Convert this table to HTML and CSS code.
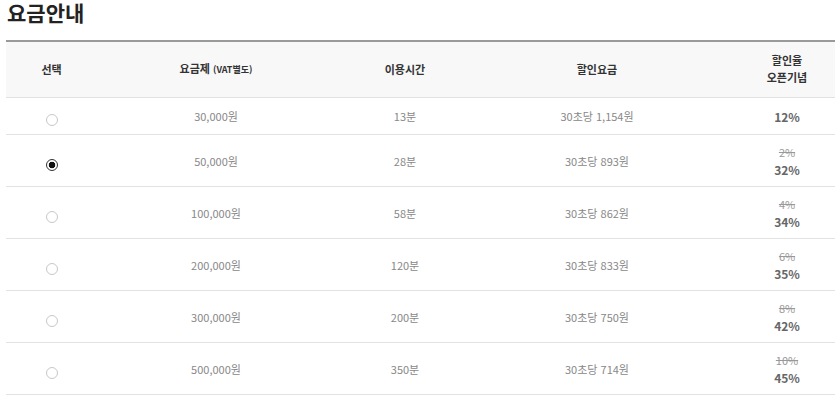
FILE: index.html
```html
<!DOCTYPE html>
<html lang="ko">
<head>
<meta charset="utf-8">
<title>요금안내</title>
<link rel="stylesheet" href="styles.css">
</head>
<body>
<div class="page">
  <h2 class="title">요금안내</h2>
  <table class="price-table">
    <colgroup>
      <col class="c1"><col class="c2"><col class="c3"><col class="c4"><col class="c5">
    </colgroup>
    <thead>
      <tr>
        <th>선택</th>
        <th>요금제 <span class="sub">(VAT별도)</span></th>
        <th>이용시간</th>
        <th>할인요금</th>
        <th class="rate">할인율<br>오픈기념</th>
      </tr>
    </thead>
    <tbody>
      <tr>
        <td><span class="radio"></span></td>
        <td>30,000원</td>
        <td>13분</td>
        <td>30초당 1,154원</td>
        <td class="rate"><b>12%</b></td>
      </tr>
      <tr>
        <td><span class="radio checked"></span></td>
        <td>50,000원</td>
        <td>28분</td>
        <td>30초당 893원</td>
        <td class="rate"><s>2%</s><b>32%</b></td>
      </tr>
      <tr>
        <td><span class="radio"></span></td>
        <td>100,000원</td>
        <td>58분</td>
        <td>30초당 862원</td>
        <td class="rate"><s>4%</s><b>34%</b></td>
      </tr>
      <tr>
        <td><span class="radio"></span></td>
        <td>200,000원</td>
        <td>120분</td>
        <td>30초당 833원</td>
        <td class="rate"><s>6%</s><b>35%</b></td>
      </tr>
      <tr>
        <td><span class="radio"></span></td>
        <td>300,000원</td>
        <td>200분</td>
        <td>30초당 750원</td>
        <td class="rate"><s>8%</s><b>42%</b></td>
      </tr>
      <tr>
        <td><span class="radio"></span></td>
        <td>500,000원</td>
        <td>350분</td>
        <td>30초당 714원</td>
        <td class="rate"><s>10%</s><b>45%</b></td>
      </tr>
    </tbody>
  </table>
</div>
</body>
</html>
```
FILE: styles.css
```css
html, body {
  margin: 0;
  padding: 0;
  background: #fff;
}
body {
  font-family: "Noto Sans CJK KR", "Noto Sans", sans-serif;
  overflow: hidden;
}
.page {
  padding: 0 0 0 6px;
}
.title {
  margin: 0;
  padding: 0 0 0 1px;
  font-size: 21px;
  line-height: 24px;
  font-weight: 700;
  color: #222;
  height: 40px;
}
.price-table {
  width: 829px;
  border-collapse: collapse;
  table-layout: fixed;
  border-top: 2px solid #9a9a9a;
}
.c1 { width: 91px; }
.c2 { width: 238px; }
.c3 { width: 140px; }
.c4 { width: 244px; }
.c5 { width: 116px; }
.price-table th {
  background: #f8f8f8;
  color: #333;
  font-size: 11px;
  font-weight: 700;
  line-height: 17px;
  padding: 10px 0 11px;
  text-align: center;
  border-bottom: 1px solid #e2e2e2;
}
.price-table th .sub {
  font-size: 9px;
}
.price-table td {
  color: #888;
  font-size: 11px;
  line-height: 17px;
  padding: 9px 0 8px;
  height: 19px;
  text-align: center;
  vertical-align: middle;
  border-bottom: 1px solid #e2e2e2;
}
.price-table .rate {
  padding-left: 20px;
}
.price-table td b {
  display: block;
  color: #666;
  font-weight: 700;
  font-size: 12px;
  line-height: 17px;
}
.price-table td s {
  display: block;
  color: #999;
  line-height: 17px;
}
.radio {
  display: inline-block;
  box-sizing: border-box;
  width: 12px;
  height: 12px;
  border: 1px solid #c8c8c8;
  border-radius: 50%;
  vertical-align: middle;
  position: relative;
  top: 2px;
  background: #fff;
}
.radio.checked {
  border: 1px solid #333;
  background: radial-gradient(circle, #111 0 3px, #fff 3.6px);
}
```
